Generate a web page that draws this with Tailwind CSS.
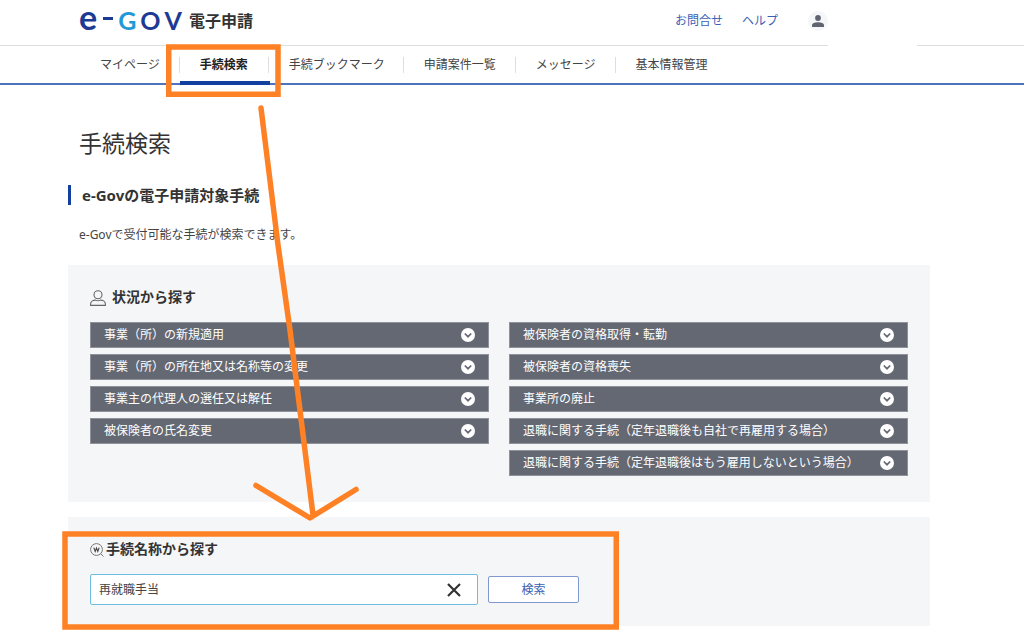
<!DOCTYPE html>
<html lang="ja">
<head>
<meta charset="utf-8">
<meta name="viewport" content="width=device-width, initial-scale=1">
<title>手続検索 | e-Gov 電子申請</title>
<script src="https://cdn.jsdelivr.net/npm/@tailwindcss/browser@4"></script>
</head>
<body class="relative min-h-screen bg-white font-['Noto_Sans','Noto_Sans_CJK_JP',sans-serif] text-xs text-[#444444]">
<svg class="hidden" aria-hidden="true">
  <symbol id="chevron" viewBox="0 0 14 14"><circle cx="7" cy="7" r="7" fill="#fff"/><path d="M3.800 5.500 7 8.700l3.200-3.200" fill="none" stroke="#646873" stroke-width="1.700"/></symbol>
</svg>

<header>
  <div class="relative flex h-[46px] items-center border-b border-[#dedede] pb-1 pl-[79px]">
    <a href="#" class="flex items-center gap-[7px]" aria-label="e-Gov 電子申請">
      <span class="flex items-baseline pb-1 font-['Lato',sans-serif] text-[25px] leading-10 font-bold text-[#1d3a94]"><span class="text-[34px] leading-10">e</span><span class="mr-[5px] ml-[6px] h-[3px] w-[10px] self-center bg-[#1d3a94]"></span><span class="flex gap-1"><span class="text-[#1f9ad6]">G</span><span>O</span><span>V</span></span></span>
      <span class="text-base leading-6 font-bold text-[#333333]">電子申請</span>
    </a>
    <nav class="mr-[196px] ml-auto flex items-center gap-[19px] text-[#3a5fb4]">
      <a href="#">お問合せ</a>
      <a href="#">ヘルプ</a>
      <button type="button" class="ml-[11px] flex size-5 items-center justify-center rounded-full bg-[#f4f6f8]" aria-label="アカウント">
        <svg class="size-3" viewBox="0 0 12 12" fill="#5f6470"><circle cx="6" cy="3" r="2.900"/><path d="M0 12V10.200C0 8 3.500 7.200 6 7.200s6 .8 6 3V12z"/></svg>
      </button>
    </nav>
    <span class="absolute right-[107px] -bottom-px h-px w-[89px] bg-white"></span>
  </div>
  <nav class="border-b-2 border-[#4f74bb] pl-20">
    <ul class="flex h-[37px] items-center whitespace-nowrap">
      <li class="pr-[19px] pl-5"><a href="#">マイページ</a></li>
      <li class="relative flex h-4 items-center border-l border-[#dedede] px-5 font-bold text-[#222222]"><a href="#" aria-current="page">手続検索</a><span class="absolute -bottom-3 left-0 h-1 w-[90px] bg-[#1140a0]"></span></li>
      <li class="flex h-4 items-center border-l border-[#dedede] pr-[18px] pl-5"><a href="#">手続ブックマーク</a></li>
      <li class="flex h-4 items-center border-l border-[#dedede] pr-[19px] pl-5"><a href="#">申請案件一覧</a></li>
      <li class="flex h-4 items-center border-l border-[#dedede] pr-[19px] pl-5"><a href="#">メッセージ</a></li>
      <li class="flex h-4 items-center border-l border-[#dedede] pl-5"><a href="#">基本情報管理</a></li>
    </ul>
  </nav>
</header>

<main class="mr-[94px] ml-[68px] pt-10">
  <h1 class="pl-[11px] text-[23px] leading-9 text-[#333333]">手続検索</h1>
  <h2 class="mt-6 border-l-3 border-[#1140a0] pl-[11px] text-[15px] leading-5 font-bold text-[#333333]">e-Govの電子申請対象手続</h2>
  <p class="mt-5 pl-[11px] leading-5">e-Govで受付可能な手続が検索できます。</p>

  <section class="mt-5 bg-[#f4f6f8] px-[22px] pt-[22px] pb-[26px]">
    <h3 class="flex items-center gap-[6px] text-sm leading-5 font-bold text-[#333333]">
      <svg class="mt-px size-4" viewBox="0 0 16 16" fill="none" stroke="#666" stroke-width="1.100"><circle cx="8" cy="4.800" r="4"/><path d="M.6 15.400V14c0-2.500 2.400-3.900 4.900-3.900.8.500 1.500.7 2.500.7s1.700-.2 2.500-.7c2.500 0 4.900 1.400 4.900 3.900v1.400z"/></svg>
      状況から探す
    </h3>
    <div class="mt-[15px] grid grid-cols-2 items-start gap-x-5 text-white">
      <ul class="flex flex-col gap-[6px]">
        <li><button type="button" class="flex h-[26px] w-full items-center justify-between border border-[#8f929a] bg-[#646873] px-[13px]">事業（所）の新規適用<svg class="size-[14px]"><use href="#chevron"/></svg></button></li>
        <li><button type="button" class="flex h-[26px] w-full items-center justify-between border border-[#8f929a] bg-[#646873] px-[13px]">事業（所）の所在地又は名称等の変更<svg class="size-[14px]"><use href="#chevron"/></svg></button></li>
        <li><button type="button" class="flex h-[26px] w-full items-center justify-between border border-[#8f929a] bg-[#646873] px-[13px]">事業主の代理人の選任又は解任<svg class="size-[14px]"><use href="#chevron"/></svg></button></li>
        <li><button type="button" class="flex h-[26px] w-full items-center justify-between border border-[#8f929a] bg-[#646873] px-[13px]">被保険者の氏名変更<svg class="size-[14px]"><use href="#chevron"/></svg></button></li>
      </ul>
      <ul class="flex flex-col gap-[6px]">
        <li><button type="button" class="flex h-[26px] w-full items-center justify-between border border-[#8f929a] bg-[#646873] px-[13px]">被保険者の資格取得・転勤<svg class="size-[14px]"><use href="#chevron"/></svg></button></li>
        <li><button type="button" class="flex h-[26px] w-full items-center justify-between border border-[#8f929a] bg-[#646873] px-[13px]">被保険者の資格喪失<svg class="size-[14px]"><use href="#chevron"/></svg></button></li>
        <li><button type="button" class="flex h-[26px] w-full items-center justify-between border border-[#8f929a] bg-[#646873] px-[13px]">事業所の廃止<svg class="size-[14px]"><use href="#chevron"/></svg></button></li>
        <li><button type="button" class="flex h-[26px] w-full items-center justify-between border border-[#8f929a] bg-[#646873] px-[13px]">退職に関する手続（定年退職後も自社で再雇用する場合）<svg class="size-[14px]"><use href="#chevron"/></svg></button></li>
        <li><button type="button" class="flex h-[26px] w-full items-center justify-between border border-[#8f929a] bg-[#646873] px-[13px]">退職に関する手続（定年退職後はもう雇用しないという場合）<svg class="size-[14px]"><use href="#chevron"/></svg></button></li>
      </ul>
    </div>
  </section>

  <section class="mt-[15px] bg-[#f4f6f8] px-[22px] pt-[22px] pb-[21px]">
    <h3 class="text-sm leading-5 font-bold text-[#333333]">
      <label for="keyword" class="flex items-center gap-[2px]">
        <svg class="mt-px size-[14px]" viewBox="0 0 14 14" fill="none" stroke="#777"><circle cx="6.500" cy="6.500" r="5.900"/><path d="m10.800 10.800 2.700 2.700"/><path d="M3.800 4.600 5.200 8.500 6.500 5l1.300 3.500 1.400-3.900" stroke="#444" stroke-width="1.100"/></svg>
        手続名称から探す
      </label>
    </h3>
    <form class="mt-[15px] flex items-center gap-[10px]">
      <div class="flex h-[31px] w-[388px] items-center rounded-xs border border-[#6fbde3] bg-white pr-4 pl-2">
        <input id="keyword" type="text" value="再就職手当" class="min-w-0 flex-1 outline-none">
        <button type="button" aria-label="クリア"><svg class="size-[14px]" viewBox="0 0 14 14" stroke="#333" stroke-width="2.200"><path d="m1 1 12 12M13 1 1 13"/></svg></button>
      </div>
      <button type="submit" class="h-[27px] w-[91px] rounded-xs border border-[#7f98cf] bg-white text-[#3a5fb4]">検索</button>
    </form>
  </section>
</main>

<!-- Guide marks: menu tab, arrow, search form -->
<svg class="pointer-events-none absolute top-0 left-0" width="640" height="637" viewBox="0 0 640 637" fill="none" stroke="#ff8125" stroke-width="5.500" stroke-linecap="round" stroke-linejoin="round" aria-hidden="true">
  <path stroke-linejoin="miter" d="M168.750 47H278v47.250H168.750zM65 534h551.250v93H65z"/>
  <path d="M261 108 278 245 290 330 313 515M256 485.500 310 518 356 489.500"/>
</svg>
</body>
</html>
